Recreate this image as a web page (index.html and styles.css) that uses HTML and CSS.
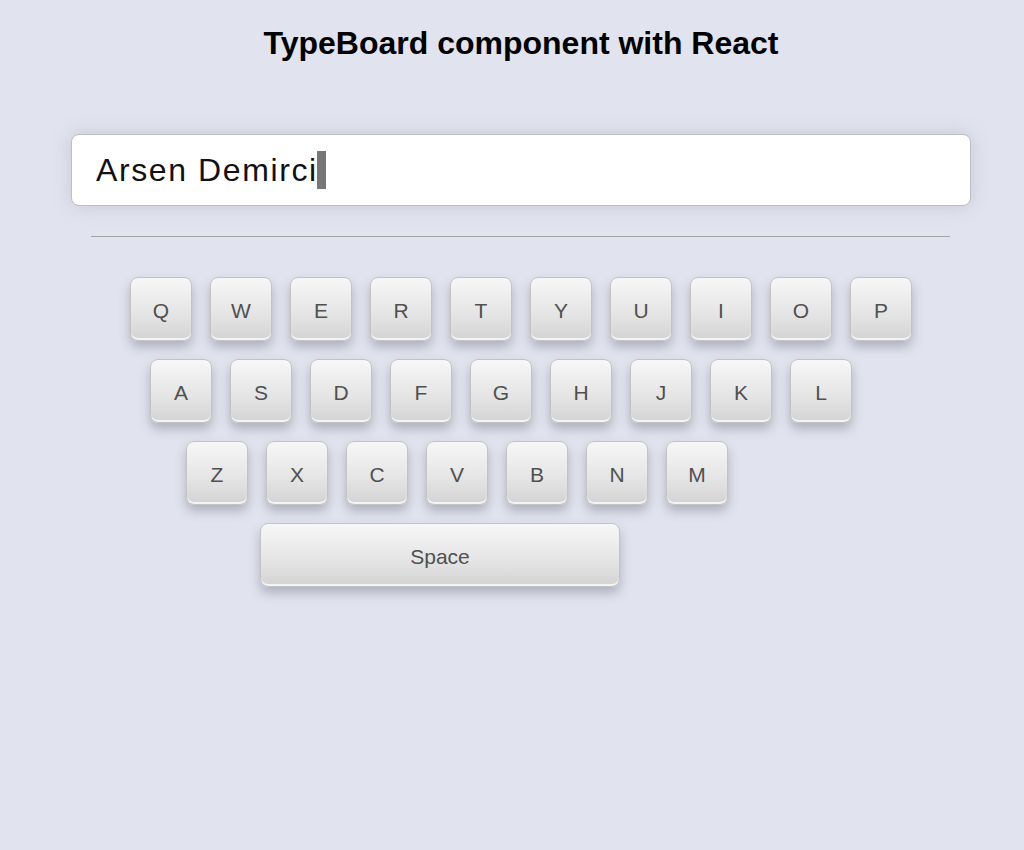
FILE: index.html
```html
<!DOCTYPE html>
<html>
<head>
<meta charset="utf-8">
<link rel="stylesheet" href="styles.css">
</head>
<body>
<h1 class="title">TypeBoard component with React</h1>
<div class="display"><span class="typed">Arsen Demirci</span><span class="cursor"></span></div>
<hr class="divider">
<div class="keyboard">
  <div class="row row1">
    <div class="key">Q</div><div class="key">W</div><div class="key">E</div><div class="key">R</div><div class="key">T</div><div class="key">Y</div><div class="key">U</div><div class="key">I</div><div class="key">O</div><div class="key">P</div>
  </div>
  <div class="row row2">
    <div class="key">A</div><div class="key">S</div><div class="key">D</div><div class="key">F</div><div class="key">G</div><div class="key">H</div><div class="key">J</div><div class="key">K</div><div class="key">L</div>
  </div>
  <div class="row row3">
    <div class="key">Z</div><div class="key">X</div><div class="key">C</div><div class="key">V</div><div class="key">B</div><div class="key">N</div><div class="key">M</div>
  </div>
  <div class="row row4">
    <div class="key space">Space</div>
  </div>
</div>
</body>
</html>
```
FILE: styles.css
```css
html, body {
  margin: 0;
  padding: 0;
  background: #e1e3ee;
  font-family: "Liberation Sans", Arial, sans-serif;
}
body {
  padding-top: 25px;
  min-height: 850px;
  box-sizing: border-box;
}
.title {
  margin: 0;
  padding-left: 18px;
  text-align: center;
  font-size: 32px;
  font-weight: bold;
  color: #000;
  line-height: 36px;
}
.display {
  margin: 73px 0 0 71px;
  width: 900px;
  height: 72px;
  box-sizing: border-box;
  background: #fff;
  border: 1px solid #bdbdc4;
  border-radius: 8px;
  box-shadow: 0 0 18px rgba(150, 152, 170, 0.35);
  display: flex;
  align-items: center;
  padding-left: 24px;
}
.typed {
  font-family: "Liberation Sans", Arial, sans-serif;
  font-size: 32px;
  letter-spacing: 1.6px;
  color: #111;
}
.cursor {
  display: inline-block;
  width: 9px;
  height: 38px;
  background: #777;
  margin-left: -1px;
}
.divider {
  margin: 30px 0 0 91px;
  width: 859px;
  border: 0;
  border-top: 1px solid #a3a3a8;
  height: 0;
}
.keyboard {
  margin-top: 40px;
  display: flex;
  flex-direction: column;
  gap: 18px;
}
.row {
  display: flex;
  gap: 18px;
}
.row1 { padding-left: 130px; }
.row2 { padding-left: 150px; }
.row3 { padding-left: 186px; }
.row4 { padding-left: 260px; }
.key {
  width: 62px;
  height: 64px;
  box-sizing: border-box;
  padding-top: 3px;
  border: 1px solid #c3c3c6;
  border-radius: 8px;
  background: linear-gradient(to bottom, #f7f7f7 0%, #e4e4e4 60%, #d3d3d3 100%);
  box-shadow: inset 0 -2px 0 #f4f4f4, 0 6px 11px rgba(80, 82, 100, 0.35);
  display: flex;
  align-items: center;
  justify-content: center;
  font-size: 21px;
  color: #505050;
}
.space {
  width: 360px;
  height: 64px;
  font-size: 21px;
}
```
